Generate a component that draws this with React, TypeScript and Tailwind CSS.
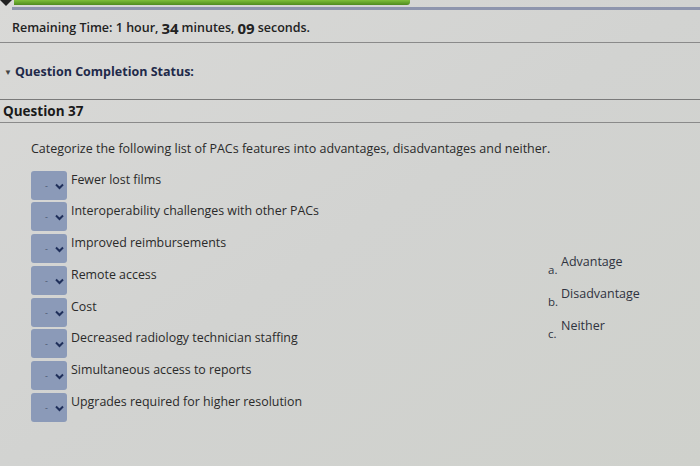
import React from "react";

const items = [
  "Fewer lost films",
  "Interoperability challenges with other PACs",
  "Improved reimbursements",
  "Remote access",
  "Cost",
  "Decreased radiology technician staffing",
  "Simultaneous access to reports",
  "Upgrades required for higher resolution",
];

function Chevron() {
  return (
    <svg width="9" height="7" viewBox="0 0 9 7" className="mt-[2px]">
      <path d="M1 1.5 L4.5 5 L8 1.5" fill="none" stroke="#1f2f5a" strokeWidth="2" />
    </svg>
  );
}

export default function App() {
  return (
    <div
      className="relative w-[700px] h-[466px] overflow-hidden bg-gradient-to-br from-[#d9d9d7] via-[#d2d3d1] to-[#cfd1cc] text-[#2b2b2b] flex flex-col"
      style={{ fontFamily: '"Open Sans", "Liberation Sans", sans-serif' }}
    >
      {/* top progress */}
      <div className="flex items-start h-[6px]">
        <div className="w-0 h-0 border-l-[6px] border-r-[6px] border-t-[6px] border-l-transparent border-r-transparent border-t-[#222]" />
        <div className="ml-[2px] w-[396px] h-[5px] bg-gradient-to-b from-[#7fbf3a] to-[#4e8a1e] rounded-br-[3px]" />
      </div>
      <div className="h-[3px] bg-[#8e95ad] ml-[12px] mt-[1px]" />
      <div className="h-[32px] flex items-center pt-[4px] pl-[12px] text-[12.5px] font-semibold text-[#222]">
        Remaining Time: 1 hour, <span className="text-[15px] font-bold mx-[3px]">34</span> minutes,{" "}
        <span className="text-[15px] font-bold mx-[3px]">09</span> seconds.
      </div>
      <div className="h-[1px] bg-[#8a8a8a]" />
      <div className="h-[56px] flex items-center pt-[2px] pl-[4px] text-[12.5px] font-bold text-[#1f2a4a]">
        <span className="text-[8px] mr-[3px] text-[#444]">▼</span>
        Question Completion Status:
      </div>
      <div className="h-[1px] bg-[#7a7a7a]" />
      <div className="h-[22px] flex items-end pb-[1px] pl-[3px] text-[13.5px] font-bold text-[#1a1a1a]">
        Question 37
      </div>
      <div className="h-[1px] bg-[#8a8a8a]" />

      <div className="flex">
        <div className="flex flex-col pl-[31px] pt-[17px]">
          <div className="text-[12.5px] text-[#2a2a2a] mb-[12px]">
            Categorize the following list of PACs features into advantages, disadvantages and neither.
          </div>
          <div className="flex flex-col gap-[2.7px]">
            {items.map((t) => (
              <div key={t} className="flex items-start">
                <div className="w-[36px] h-[29px] bg-[#8b9ab8] rounded-[3px] flex items-center justify-end pr-[3px] gap-[7px]">
                  <span className="text-[9px] text-[#4a5570] leading-none">-</span>
                  <Chevron />
                </div>
                <div className="ml-[4px] mt-[0px] text-[12.4px] text-[#2a2a2a]">{t}</div>
              </div>
            ))}
          </div>
        </div>
      </div>
      <div className="absolute left-[548px] top-[253px] flex flex-col gap-[10px] text-[12.5px] text-[#2f3340]">
        {[
          ["a.", "Advantage"],
          ["b.", "Disadvantage"],
          ["c.", "Neither"],
        ].map(([l, t]) => (
          <div key={l} className="flex items-start h-[22px]">
            <span className="mt-[8px] text-[11.5px] w-[13px]">{l}</span>
            <span>{t}</span>
          </div>
        ))}
      </div>
    </div>
  );
}
